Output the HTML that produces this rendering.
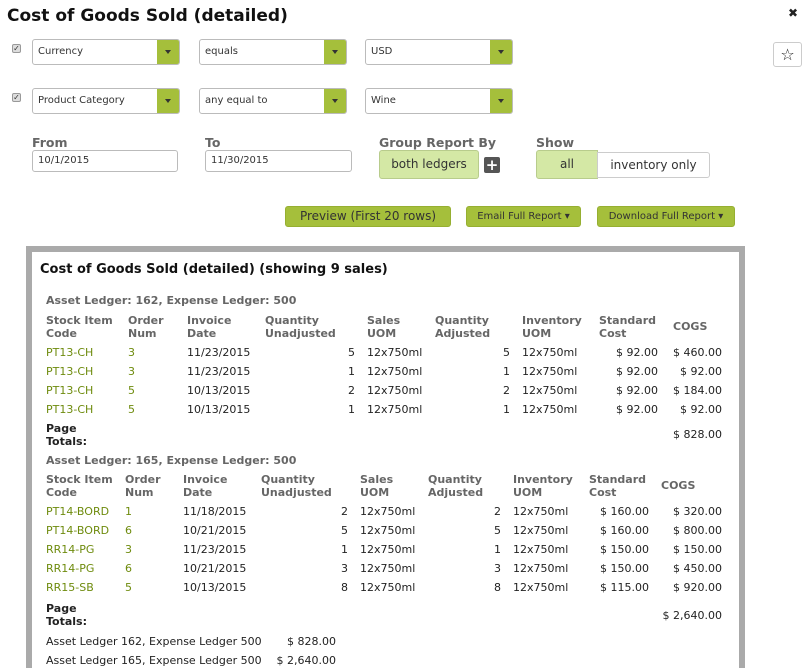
<!DOCTYPE html>
<html><head><meta charset="utf-8"><style>
*{margin:0;padding:0;box-sizing:border-box}
html,body{width:803px;height:668px;overflow:hidden}
body{background:#fff;font-family:"DejaVu Sans","Liberation Sans",sans-serif;color:#222;position:relative}
.a{position:absolute;white-space:nowrap}
.t{position:absolute;white-space:nowrap;font-size:11px;line-height:13px;top:0}
.r{text-align:right}
.h{color:#666;font-weight:bold}
.g{color:#6e8b0d}
.b{font-weight:bold;color:#222}
.sel{position:absolute;height:26px;border:1px solid #bbb;border-radius:3px;background:#fff;font-size:10px;line-height:24px;padding-left:5px;color:#333;overflow:hidden}
.sel i{position:absolute;right:0;top:0;width:22px;height:24px;background:#a5bf3b}
.sel i:after{content:"";position:absolute;left:8px;top:10px;border:3px solid transparent;border-top:4px solid #333}
.inp{position:absolute;height:22px;border:1px solid #bbb;border-radius:3px;font-size:10px;line-height:20px;padding-left:5px;color:#333}
.lbl{position:absolute;font-size:13px;font-weight:bold;color:#666}
.btn{position:absolute;height:21px;background:#a5bf3b;border:1px solid #96af31;border-radius:3px;font-size:10px;line-height:19px;text-align:center;color:#333}
.cb{position:absolute;width:9px;height:9px;border:1px solid #999;background:#ddd;border-radius:2px;font-size:8px;line-height:8px;text-align:center;color:#333}
#w{position:absolute;left:0;top:0;width:803px;height:668px}
</style></head><body>
<div class="a" style="left:7px;top:6px;font-size:17px;font-weight:bold;color:#111">Cost of Goods Sold (detailed)</div>
<div class="a" style="left:788px;top:6px;font-size:12px;font-weight:bold">✖</div>
<div class="a" style="left:773px;top:42px;width:29px;height:25px;border:1px solid #ccc;border-radius:3px;text-align:center;font-size:16px;line-height:23px">☆</div>

<div class="cb" style="left:12px;top:44px">✓</div>
<div class="sel" style="left:32px;top:39px;width:148px">Currency<i></i></div>
<div class="sel" style="left:199px;top:39px;width:148px">equals<i></i></div>
<div class="sel" style="left:365px;top:39px;width:148px">USD<i></i></div>
<div class="cb" style="left:12px;top:93px">✓</div>
<div class="sel" style="left:32px;top:88px;width:148px">Product Category<i></i></div>
<div class="sel" style="left:199px;top:88px;width:148px">any equal to<i></i></div>
<div class="sel" style="left:365px;top:88px;width:148px">Wine<i></i></div>

<div class="lbl" style="left:32px;top:135px;font-size:12.5px">From</div>
<div class="inp" style="left:32px;top:150px;width:146px">10/1/2015</div>
<div class="lbl" style="left:205px;top:135px;font-size:12.5px">To</div>
<div class="inp" style="left:205px;top:150px;width:147px">11/30/2015</div>
<div class="lbl" style="left:379px;top:135px;font-size:12.5px">Group Report By</div>
<div class="a" style="left:379px;top:150px;width:100px;height:29px;background:#d4e8a5;border:1px solid #b8cc8c;border-radius:3px;font-size:12px;line-height:27px;text-align:center;color:#333">both ledgers</div>
<div class="a" style="left:484px;top:157px;width:16px;height:16px;background:#555;border-radius:2px;color:#fff;font-size:15px;line-height:16px;text-align:center;font-weight:bold">+</div>
<div class="lbl" style="left:536px;top:135px;font-size:12.5px">Show</div>
<div class="a" style="left:536px;top:150px;width:62px;height:29px;background:#d4e8a5;border:1px solid #b8cc8c;border-radius:3px 0 0 3px;font-size:12px;line-height:27px;text-align:center;color:#333">all</div>
<div class="a" style="left:597px;top:152px;width:113px;height:26px;background:#fff;border:1px solid #ccc;border-radius:0 3px 3px 0;font-size:12px;line-height:24px;text-align:center;color:#333">inventory only</div>

<div class="btn" style="left:285px;top:206px;width:166px;font-size:12px">Preview (First 20 rows)</div>
<div class="btn" style="left:466px;top:206px;width:115px">Email Full Report ▾</div>
<div class="btn" style="left:597px;top:206px;width:138px">Download Full Report ▾</div>

<div class="a" style="left:26px;top:246px;width:719px;height:422px;border:6px solid #aaa;border-bottom:none"></div>
<div class="a" style="left:40px;top:262px;font-size:13px;font-weight:bold;color:#111">Cost of Goods Sold (detailed) (showing 9 sales)</div>

<div id="w">
<div class="t h" style="left:46px;top:294px">Asset Ledger: 162, Expense Ledger: 500</div>
<div class="t h" style="left:46px;top:314px">Stock Item<br>Code</div>
<div class="t h" style="left:128px;top:314px">Order<br>Num</div>
<div class="t h" style="left:187px;top:314px">Invoice<br>Date</div>
<div class="t h" style="left:265px;top:314px">Quantity<br>Unadjusted</div>
<div class="t h" style="left:367px;top:314px">Sales<br>UOM</div>
<div class="t h" style="left:435px;top:314px">Quantity<br>Adjusted</div>
<div class="t h" style="left:522px;top:314px">Inventory<br>UOM</div>
<div class="t h" style="left:599px;top:314px">Standard<br>Cost</div>
<div class="t h" style="left:673px;top:320px">COGS</div>

<div class="t g" style="left:46px;top:346px">PT13-CH</div><div class="t g" style="left:128px;top:346px">3</div><div class="t" style="left:187px;top:346px">11/23/2015</div><div class="t r" style="right:448px;top:346px">5</div><div class="t" style="left:367px;top:346px">12x750ml</div><div class="t r" style="right:293px;top:346px">5</div><div class="t" style="left:522px;top:346px">12x750ml</div><div class="t r" style="right:145px;top:346px">$ 92.00</div><div class="t r" style="right:81px;top:346px">$ 460.00</div>
<div class="t g" style="left:46px;top:365px">PT13-CH</div><div class="t g" style="left:128px;top:365px">3</div><div class="t" style="left:187px;top:365px">11/23/2015</div><div class="t r" style="right:448px;top:365px">1</div><div class="t" style="left:367px;top:365px">12x750ml</div><div class="t r" style="right:293px;top:365px">1</div><div class="t" style="left:522px;top:365px">12x750ml</div><div class="t r" style="right:145px;top:365px">$ 92.00</div><div class="t r" style="right:81px;top:365px">$ 92.00</div>
<div class="t g" style="left:46px;top:384px">PT13-CH</div><div class="t g" style="left:128px;top:384px">5</div><div class="t" style="left:187px;top:384px">10/13/2015</div><div class="t r" style="right:448px;top:384px">2</div><div class="t" style="left:367px;top:384px">12x750ml</div><div class="t r" style="right:293px;top:384px">2</div><div class="t" style="left:522px;top:384px">12x750ml</div><div class="t r" style="right:145px;top:384px">$ 92.00</div><div class="t r" style="right:81px;top:384px">$ 184.00</div>
<div class="t g" style="left:46px;top:403px">PT13-CH</div><div class="t g" style="left:128px;top:403px">5</div><div class="t" style="left:187px;top:403px">10/13/2015</div><div class="t r" style="right:448px;top:403px">1</div><div class="t" style="left:367px;top:403px">12x750ml</div><div class="t r" style="right:293px;top:403px">1</div><div class="t" style="left:522px;top:403px">12x750ml</div><div class="t r" style="right:145px;top:403px">$ 92.00</div><div class="t r" style="right:81px;top:403px">$ 92.00</div>
<div class="t b" style="left:46px;top:422px">Page<br>Totals:</div>
<div class="t r" style="right:81px;top:428px">$ 828.00</div>

<div class="t h" style="left:46px;top:454px">Asset Ledger: 165, Expense Ledger: 500</div>
<div class="t h" style="left:46px;top:473px">Stock Item<br>Code</div>
<div class="t h" style="left:125px;top:473px">Order<br>Num</div>
<div class="t h" style="left:183px;top:473px">Invoice<br>Date</div>
<div class="t h" style="left:261px;top:473px">Quantity<br>Unadjusted</div>
<div class="t h" style="left:360px;top:473px">Sales<br>UOM</div>
<div class="t h" style="left:428px;top:473px">Quantity<br>Adjusted</div>
<div class="t h" style="left:513px;top:473px">Inventory<br>UOM</div>
<div class="t h" style="left:589px;top:473px">Standard<br>Cost</div>
<div class="t h" style="left:661px;top:479px">COGS</div>

<div class="t g" style="left:46px;top:505px">PT14-BORD</div><div class="t g" style="left:125px;top:505px">1</div><div class="t" style="left:183px;top:505px">11/18/2015</div><div class="t r" style="right:455px;top:505px">2</div><div class="t" style="left:360px;top:505px">12x750ml</div><div class="t r" style="right:302px;top:505px">2</div><div class="t" style="left:513px;top:505px">12x750ml</div><div class="t r" style="right:154px;top:505px">$ 160.00</div><div class="t r" style="right:81px;top:505px">$ 320.00</div>
<div class="t g" style="left:46px;top:524px">PT14-BORD</div><div class="t g" style="left:125px;top:524px">6</div><div class="t" style="left:183px;top:524px">10/21/2015</div><div class="t r" style="right:455px;top:524px">5</div><div class="t" style="left:360px;top:524px">12x750ml</div><div class="t r" style="right:302px;top:524px">5</div><div class="t" style="left:513px;top:524px">12x750ml</div><div class="t r" style="right:154px;top:524px">$ 160.00</div><div class="t r" style="right:81px;top:524px">$ 800.00</div>
<div class="t g" style="left:46px;top:543px">RR14-PG</div><div class="t g" style="left:125px;top:543px">3</div><div class="t" style="left:183px;top:543px">11/23/2015</div><div class="t r" style="right:455px;top:543px">1</div><div class="t" style="left:360px;top:543px">12x750ml</div><div class="t r" style="right:302px;top:543px">1</div><div class="t" style="left:513px;top:543px">12x750ml</div><div class="t r" style="right:154px;top:543px">$ 150.00</div><div class="t r" style="right:81px;top:543px">$ 150.00</div>
<div class="t g" style="left:46px;top:562px">RR14-PG</div><div class="t g" style="left:125px;top:562px">6</div><div class="t" style="left:183px;top:562px">10/21/2015</div><div class="t r" style="right:455px;top:562px">3</div><div class="t" style="left:360px;top:562px">12x750ml</div><div class="t r" style="right:302px;top:562px">3</div><div class="t" style="left:513px;top:562px">12x750ml</div><div class="t r" style="right:154px;top:562px">$ 150.00</div><div class="t r" style="right:81px;top:562px">$ 450.00</div>
<div class="t g" style="left:46px;top:581px">RR15-SB</div><div class="t g" style="left:125px;top:581px">5</div><div class="t" style="left:183px;top:581px">10/13/2015</div><div class="t r" style="right:455px;top:581px">8</div><div class="t" style="left:360px;top:581px">12x750ml</div><div class="t r" style="right:302px;top:581px">8</div><div class="t" style="left:513px;top:581px">12x750ml</div><div class="t r" style="right:154px;top:581px">$ 115.00</div><div class="t r" style="right:81px;top:581px">$ 920.00</div>
<div class="t b" style="left:46px;top:602px">Page<br>Totals:</div>
<div class="t r" style="right:81px;top:609px">$ 2,640.00</div>

<div class="t" style="left:46px;top:635px">Asset Ledger 162, Expense Ledger 500</div>
<div class="t r" style="right:467px;top:635px">$ 828.00</div>
<div class="t" style="left:46px;top:654px">Asset Ledger 165, Expense Ledger 500</div>
<div class="t r" style="right:467px;top:654px">$ 2,640.00</div>
</div>
</body></html>
